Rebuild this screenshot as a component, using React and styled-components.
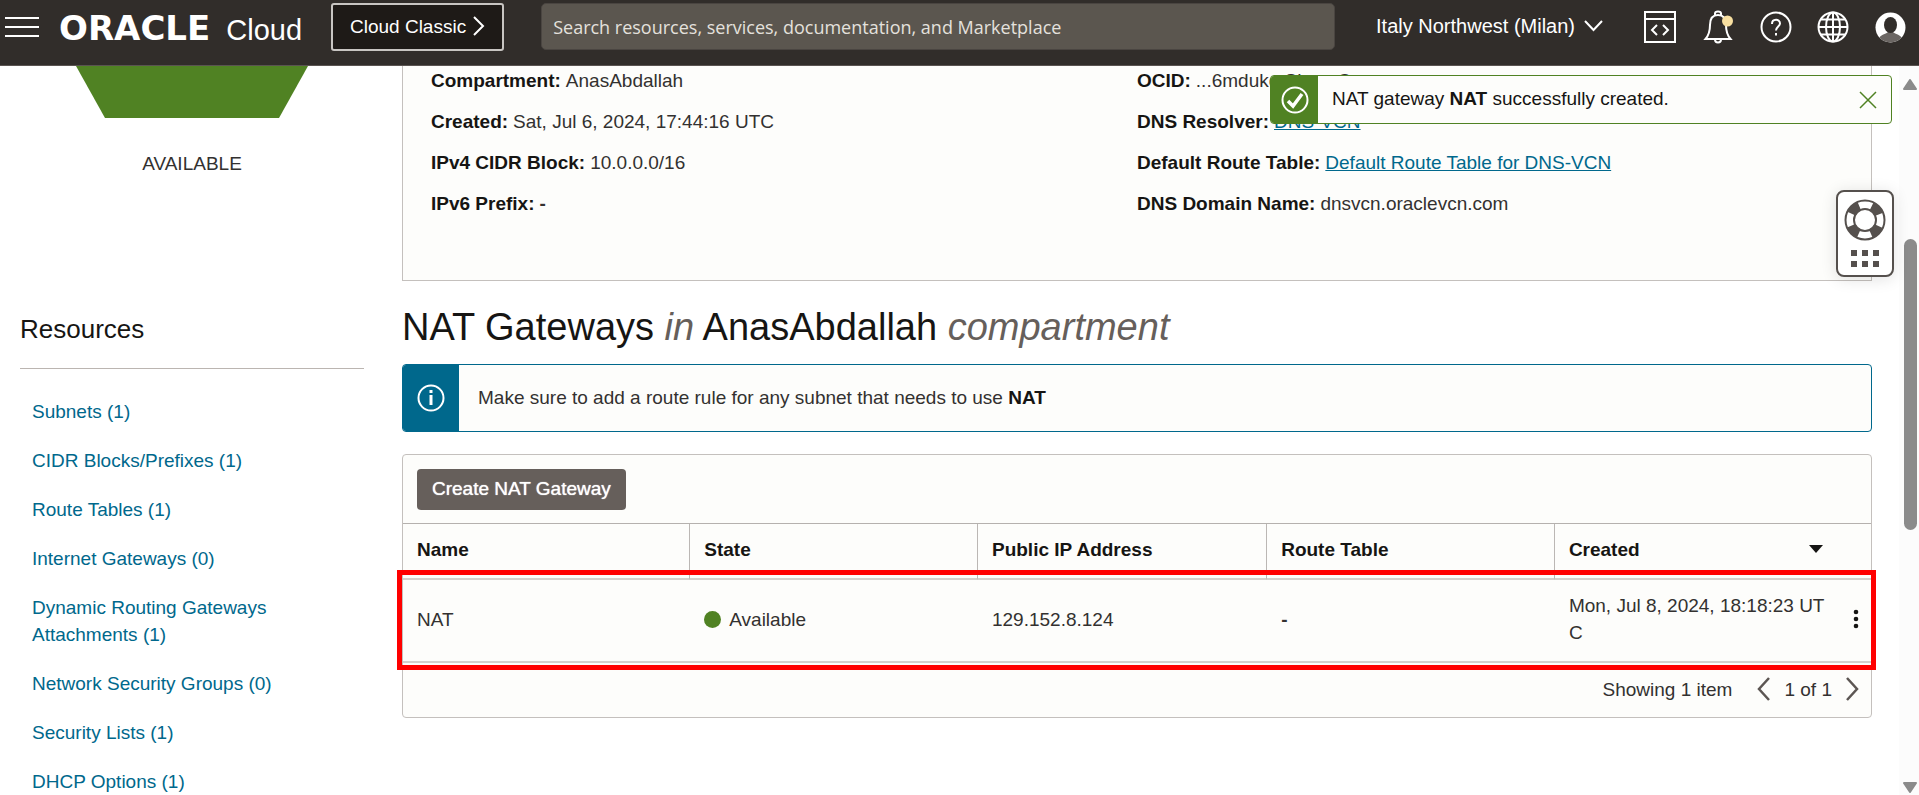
import React from 'react';
import styled, { createGlobalStyle } from 'styled-components';

const GlobalStyle = createGlobalStyle`
  * {
    box-sizing: border-box;
  }

  body {
    margin: 0;
    background: #fff;
    color: #333130;
    font-family: 'Liberation Sans', Arial, sans-serif;
    font-size: 19px;
    line-height: 27px;
  }

  button,
  input {
    font: inherit;
    margin: 0;
  }

  a {
    color: #00688c;
  }

  svg {
    display: block;
    fill: none;
    flex-shrink: 0;
  }
`;

const Page = styled.div`
  position: relative;
  display: flex;
  flex-direction: column;
  height: 100vh;
  overflow: hidden;
`;

const Header = styled.header`
  display: flex;
  align-items: flex-start;
  flex-shrink: 0;
  height: 66px;
  padding: 3px 13px 0 5px;
  background: #312d2a;
  border-bottom: 1px solid #5a5451;
  color: #fff;
`;

const IconButton = styled.button`
  display: flex;
  align-items: center;
  justify-content: center;
  height: 48px;
  padding: 0;
  border: 0;
  background: none;
  color: inherit;
  cursor: pointer;
`;

const Brand = styled.a`
  display: flex;
  align-items: baseline;
  gap: 16px;
  width: 272px;
  margin-left: 20px;
  color: #fff;
  line-height: 50px;
  text-decoration: none;
  white-space: nowrap;
`;

const BrandName = styled.span`
  font-family: 'DejaVu Sans', sans-serif;
  font-size: 34px;
  font-weight: 700;
`;

const BrandProduct = styled.span`
  font-size: 29px;
`;

const ClassicButton = styled.button`
  display: flex;
  align-items: center;
  gap: 7px;
  height: 48px;
  padding: 0 17px 2px;
  border: 2px solid #c8c5c2;
  border-radius: 3px;
  background: #1e1a17;
  color: #fff;
  white-space: nowrap;
  cursor: pointer;
`;

const Search = styled.input`
  flex: 1;
  min-width: 0;
  height: 47px;
  margin-left: 37px;
  padding: 0 11px;
  border: 1px solid #4a4541;
  border-radius: 5px;
  background: #5b564f;
  color: #fff;
  font-family: 'Open Sans', 'Noto Sans', sans-serif;
  font-size: 18px;

  &::placeholder {
    color: #e4e1dd;
    opacity: 1;
  }
`;

const Region = styled.button`
  display: flex;
  align-items: center;
  gap: 9px;
  height: 48px;
  margin-left: 41px;
  padding: 0 0 2px;
  border: 0;
  background: none;
  color: #fff;
  font-size: 20px;
  white-space: nowrap;
  cursor: pointer;
`;

const HeaderIcons = styled.div`
  display: flex;
  justify-content: space-between;
  width: 262px;
  margin-left: 41px;
`;

const Body = styled.div`
  display: flex;
  flex: 1;
  min-height: 0;
`;

const Content = styled.div`
  display: grid;
  grid-template-columns: 344px 1fr;
  column-gap: 38px;
  flex: 1;
  padding: 0 27px 0 20px;
  overflow: hidden;
`;

const Sidebar = styled.aside`
  display: flex;
  flex-direction: column;
`;

const Status = styled.div`
  display: flex;
  flex-direction: column;
  align-items: center;
  gap: 32px;
  color: #333130;
`;

const ResourcesTitle = styled.h2`
  margin: 136px 0 0;
  padding-bottom: 23px;
  border-bottom: 1px solid #bbb5b1;
  color: #161513;
  font-size: 26px;
  font-weight: 400;
  line-height: 32px;
`;

const ResourceList = styled.ul`
  display: flex;
  flex-direction: column;
  gap: 22px;
  margin: 0;
  padding: 29px 0 0 12px;
  list-style: none;

  a {
    display: block;
    text-decoration: none;
  }
`;

const Main = styled.main`
  min-width: 0;
`;

const Details = styled.dl`
  display: grid;
  grid-template-columns: 1fr 1fr;
  row-gap: 14px;
  margin: 0;
  padding: 1px 28px 63px;
  border: 1px solid #c4c0bd;
  border-top: 0;
  background: #fdfdfb;
`;

const Detail = styled.div`
  display: flex;
  gap: 5px;
  white-space: nowrap;

  dt {
    color: #161513;
    font-weight: 700;
  }

  dd {
    margin: 0;
  }
`;

const Title = styled.h1`
  margin: 24px 0 15px;
  color: #161513;
  font-size: 38px;
  font-weight: 400;
  line-height: 44px;

  em {
    color: #665f5b;
  }
`;

const Notice = styled.div`
  display: flex;
  height: ${props => (props.$toast ? 49 : 68)}px;
  border: 1px solid ${props => props.$color};
  border-radius: 4px;
  background: #fdfdfb;
  overflow: hidden;
`;

const Toast = styled.div`
  position: absolute;
  top: 75px;
  right: 27px;
  width: 622px;
  color: #161513;
`;

const NoticeIcon = styled.div`
  display: flex;
  align-items: center;
  justify-content: center;
  width: ${props => props.$width}px;
  background: ${props => props.$color};
`;

const NoticeText = styled.p`
  flex: 1;
  align-self: center;
  margin: 0;
  padding: 0 0 2px ${props => props.$indent}px;

  strong {
    color: #161513;
  }
`;

const CloseButton = styled(IconButton)`
  width: 46px;
  height: 47px;
`;

const Panel = styled.section`
  margin-top: 22px;
  border: 1px solid #c4c0bd;
  border-radius: 4px;
  background: #fdfdfb;
`;

const Toolbar = styled.div`
  padding: 14px 14px 13px;
`;

const CreateButton = styled.button`
  display: block;
  height: 41px;
  padding: 0 15px 3px;
  border: 0;
  border-radius: 4px;
  background: #665f5b;
  color: #fff;
  text-shadow: 0 0 1px #fff;
  cursor: pointer;
`;

const Table = styled.table`
  width: 100%;
  border-spacing: 0;
  border-top: 1px solid #b5b1ae;
  table-layout: fixed;
`;

const HeadCell = styled.th`
  height: 56px;
  padding: 0 0 4px 14px;
  border-bottom: 2px solid #d4d0cd;
  border-left: ${props => (props.$first ? '0' : '1px solid #bbb7b4')};
  color: #161513;
  text-align: left;
`;

const SortButton = styled.button`
  display: flex;
  align-items: center;
  justify-content: space-between;
  width: 100%;
  padding: 0 48px 0 0;
  border: 0;
  background: none;
  color: inherit;
  cursor: pointer;
`;

const Row = styled.tr`
  position: relative;

  &::after {
    content: '';
    position: absolute;
    inset: -10px -5px -7px -6px;
    border: 5px solid #f00;
    pointer-events: none;
  }
`;

const Cell = styled.td`
  height: 83px;
  padding: 0 0 3px 15px;
  border-bottom: 2px solid #d4d0cd;
  word-break: break-all;

  &:first-child {
    padding-left: 14px;
  }
`;

const State = styled.span`
  display: flex;
  align-items: center;
  gap: 8px;
`;

const Dot = styled.i`
  width: 17px;
  height: 17px;
  border-radius: 50%;
  background: #508223;
`;

const MenuButton = styled(IconButton)`
  width: 16px;
`;

const Pager = styled.footer`
  display: flex;
  align-items: center;
  justify-content: flex-end;
  gap: 13px;
  height: 54px;
  padding: 0 12px 2px 0;

  button {
    width: 14px;
    height: 24px;
    color: #5c5653;
  }
`;

const Showing = styled.span`
  margin-right: 12px;
`;

const HelpWidget = styled.button`
  position: absolute;
  top: 190px;
  right: 25px;
  display: flex;
  flex-direction: column;
  align-items: center;
  gap: 9px;
  height: 87px;
  width: 58px;
  padding: 7px 0 0;
  border: 2px solid #55504d;
  border-radius: 8px;
  background: #fff;
  box-shadow: 0 2px 16px rgba(0, 0, 0, 0.12);
  color: #55504d;
  cursor: pointer;
`;

const ScrollTrack = styled.div`
  display: flex;
  flex-direction: column;
  align-items: center;
  width: 20px;
  padding: 13px 0 2px 2px;
  background: #fcfcfc;
`;

const ScrollThumb = styled.div`
  width: 13px;
  height: 291px;
  margin: 149px 0 auto;
  border-radius: 7px;
  background: #8b8b8b;
`;

const Chevron = ({ width, height, d, stroke = 2 }) => (
  <svg width={width} height={height} viewBox={`0 0 ${width} ${height}`} stroke="currentColor" strokeWidth={stroke}>
    <path d={d} />
  </svg>
);

const resources = [
  'Subnets (1)',
  'CIDR Blocks/Prefixes (1)',
  'Route Tables (1)',
  'Internet Gateways (0)',
  'Dynamic Routing Gateways Attachments (1)',
  'Network Security Groups (0)',
  'Security Lists (1)',
  'DHCP Options (1)',
];

const details = [
  ['Compartment:', 'AnasAbdallah'],
  ['OCID:', '...6mdukq Show Copy'],
  ['Created:', 'Sat, Jul 6, 2024, 17:44:16 UTC'],
  ['DNS Resolver:', <a href="#resolver">DNS-VCN</a>],
  ['IPv4 CIDR Block:', '10.0.0.0/16'],
  ['Default Route Table:', <a href="#route-table">Default Route Table for DNS-VCN</a>],
  ['IPv6 Prefix:', <strong>-</strong>],
  ['DNS Domain Name:', 'dnsvcn.oraclevcn.com'],
];

const TopBar = () => (
  <Header>
    <IconButton aria-label="Menu">
      <svg width="34" height="20" viewBox="0 0 34 20" stroke="#fff" strokeWidth="2">
        <path d="M0 1h34M0 10h34M0 19h34" />
      </svg>
    </IconButton>
    <Brand href="#home">
      <BrandName>ORACLE</BrandName>
      <BrandProduct>Cloud</BrandProduct>
    </Brand>
    <ClassicButton>
      <span>Cloud Classic</span>
      <Chevron width={12} height={20} d="M1 1L10 10L1 19" />
    </ClassicButton>
    <Search aria-label="Search" placeholder="Search resources, services, documentation, and Marketplace" />
    <Region>
      <span>Italy Northwest (Milan)</span>
      <Chevron width={19} height={12} d="M1 1L9.500 10L18 1" />
    </Region>
    <HeaderIcons>
      <IconButton aria-label="Developer tools">
        <svg width="32" height="32" viewBox="0 0 32 32" stroke="#fff" strokeWidth="2">
          <path d="M1 1h30v30H1zM1 8h30M13 14l-5 5 5 5M19 14l5 5-5 5" />
        </svg>
      </IconButton>
      <IconButton aria-label="Announcements">
        <svg width="32" height="34" viewBox="-2 0 32 34" stroke="#fff" strokeWidth="2">
          <path d="M11 5V3.500C11 .8 17 .8 17 3.500V5M1.500 29C5 25 6 21 6 15C6 8 9 5 14 5S22 8 22 15C22 21 23 25 26.500 29zM11 29.500C11 33.500 17 33.500 17 29.500" />
          <circle cx="23.500" cy="11" r="5.500" fill="#f8dfa0" stroke="none" />
        </svg>
      </IconButton>
      <IconButton aria-label="Help">
        <svg width="32" height="32" viewBox="0 0 32 32" stroke="#fff" strokeWidth="2">
          <circle cx="16" cy="16" r="14.500" />
          <path d="M12 13C12 7.500 20 7.500 20 12.500C20 15.500 16 15.500 16 19.500M16 22v2.500" />
        </svg>
      </IconButton>
      <IconButton aria-label="Language">
        <svg width="32" height="32" viewBox="0 0 32 32" stroke="#fff" strokeWidth="2">
          <circle cx="16" cy="16" r="14.500" />
          <ellipse cx="16" cy="16" rx="7" ry="14.500" />
          <path d="M16 1.500v29M1.500 16h29M4 8.500h24M4 23.500h24" />
        </svg>
      </IconButton>
      <IconButton aria-label="Profile">
        <svg width="31" height="31" viewBox="0 0 31 31">
          <circle cx="15.500" cy="15.500" r="15" fill="#fff" />
          <path d="M4.500 25.500C7 22 11 22 13 20H18C20 22 24 22 26.500 25.500C20.500 32 10.500 32 4.500 25.500z" fill="#6b6663" />
          <ellipse cx="15.500" cy="13" rx="6.500" ry="8" fill="#312d2a" />
        </svg>
      </IconButton>
    </HeaderIcons>
  </Header>
);

const ResourceNav = () => (
  <Sidebar>
    <Status>
      <svg width="232" height="52" viewBox="0 0 232 52">
        <path d="M0 0H232L203 52H29z" fill="#508223" />
      </svg>
      <span>AVAILABLE</span>
    </Status>
    <ResourcesTitle>Resources</ResourcesTitle>
    <ResourceList>
      {resources.map(name => (
        <li key={name}>
          <a href="#resource">{name}</a>
        </li>
      ))}
    </ResourceList>
  </Sidebar>
);

const GatewayTable = () => (
  <Panel>
    <Toolbar>
      <CreateButton>Create NAT Gateway</CreateButton>
    </Toolbar>
    <Table>
      <colgroup>
        <col width="19.5%" />
        <col width="19.6%" />
        <col width="19.7%" />
        <col width="19.6%" />
        <col width="19%" />
        <col width="2.6%" />
      </colgroup>
      <thead>
        <tr>
          <HeadCell $first>Name</HeadCell>
          <HeadCell>State</HeadCell>
          <HeadCell>Public IP Address</HeadCell>
          <HeadCell>Route Table</HeadCell>
          <HeadCell colSpan={2}>
            <SortButton>
              <span>Created</span>
              <svg width="14" height="8" viewBox="0 0 14 8">
                <path d="M0 0h14L7 8z" fill="#161513" />
              </svg>
            </SortButton>
          </HeadCell>
        </tr>
      </thead>
      <tbody>
        <Row>
          <Cell>NAT</Cell>
          <Cell>
            <State>
              <Dot />
              Available
            </State>
          </Cell>
          <Cell>129.152.8.124</Cell>
          <Cell>
            <strong>-</strong>
          </Cell>
          <Cell>Mon, Jul 8, 2024, 18:18:23 UTC</Cell>
          <Cell>
            <MenuButton aria-label="Actions">
              <svg width="6" height="20" viewBox="0 0 6 20">
                <g fill="#161513">
                  <circle cx="3" cy="3" r="2.300" />
                  <circle cx="3" cy="10" r="2.300" />
                  <circle cx="3" cy="17" r="2.300" />
                </g>
              </svg>
            </MenuButton>
          </Cell>
        </Row>
      </tbody>
    </Table>
    <Pager>
      <Showing>Showing 1 item</Showing>
      <IconButton aria-label="Previous page">
        <Chevron width={14} height={24} d="M12 1L2 12L12 23" stroke={2.5} />
      </IconButton>
      <span>1 of 1</span>
      <IconButton aria-label="Next page">
        <Chevron width={14} height={24} d="M2 1L12 12L2 23" stroke={2.5} />
      </IconButton>
    </Pager>
  </Panel>
);

const CreatedToast = () => (
  <Toast role="status">
    <Notice $toast $color="#508223">
      <NoticeIcon $width={47} $color="#508223">
        <svg width="28" height="28" viewBox="0 0 28 28" stroke="#fff">
          <circle cx="14" cy="14" r="12.500" strokeWidth="2" />
          <path d="M7 15l5 5 9-12" strokeWidth="3.500" />
        </svg>
      </NoticeIcon>
      <NoticeText $indent={14}>
        NAT gateway <strong>NAT</strong> successfully created.
      </NoticeText>
      <CloseButton aria-label="Close">
        <svg width="18" height="18" viewBox="0 0 18 18" stroke="#508223" strokeWidth="1.500">
          <path d="M1 1l16 16M17 1L1 17" />
        </svg>
      </CloseButton>
    </Notice>
  </Toast>
);

const SupportWidget = () => (
  <HelpWidget aria-label="Support">
    <svg width="42" height="42" viewBox="0 0 42 42" stroke="currentColor">
      <circle cx="21" cy="21" r="15" strokeWidth="9" strokeDasharray="11 12.560" strokeDashoffset="-6.300" />
      <circle cx="21" cy="21" r="19.500" strokeWidth="2" />
      <circle cx="21" cy="21" r="11" strokeWidth="2" />
    </svg>
    <svg width="28" height="18" viewBox="0 0 28 18">
      <path d="M0 0h6v6H0zM11 0h6v6h-6zM22 0h6v6h-6zM0 11h6v6H0zM11 11h6v6h-6zM22 11h6v6h-6z" fill="currentColor" />
    </svg>
  </HelpWidget>
);

export default () => (
  <Page>
    <GlobalStyle />
    <TopBar />
    <Body>
      <Content>
        <ResourceNav />
        <Main>
          <Details>
            {details.map(([label, value]) => (
              <Detail key={label}>
                <dt>{label}</dt>
                <dd>{value}</dd>
              </Detail>
            ))}
          </Details>
          <Title>
            NAT Gateways <em>in</em> AnasAbdallah <em>compartment</em>
          </Title>
          <Notice $color="#00688c">
            <NoticeIcon $width={56} $color="#00688c">
              <svg width="28" height="28" viewBox="0 0 28 28" stroke="#fff">
                <circle cx="14" cy="14" r="12.500" strokeWidth="2" />
                <path d="M14 6v3M14 11v10" strokeWidth="3" />
              </svg>
            </NoticeIcon>
            <NoticeText $indent={19}>
              Make sure to add a route rule for any subnet that needs to use <strong>NAT</strong>
            </NoticeText>
          </Notice>
          <GatewayTable />
        </Main>
      </Content>
      <ScrollTrack aria-hidden="true">
        <svg width="14" height="11" viewBox="0 0 14 11">
          <path d="M7 1L13 10H1z" fill="#8b8b8b" stroke="#8b8b8b" strokeWidth="2" strokeLinejoin="round" />
        </svg>
        <ScrollThumb />
        <svg width="14" height="11" viewBox="0 0 14 11">
          <path d="M1 1H13L7 10z" fill="#8b8b8b" stroke="#8b8b8b" strokeWidth="2" strokeLinejoin="round" />
        </svg>
      </ScrollTrack>
    </Body>
    <CreatedToast />
    <SupportWidget />
  </Page>
);
